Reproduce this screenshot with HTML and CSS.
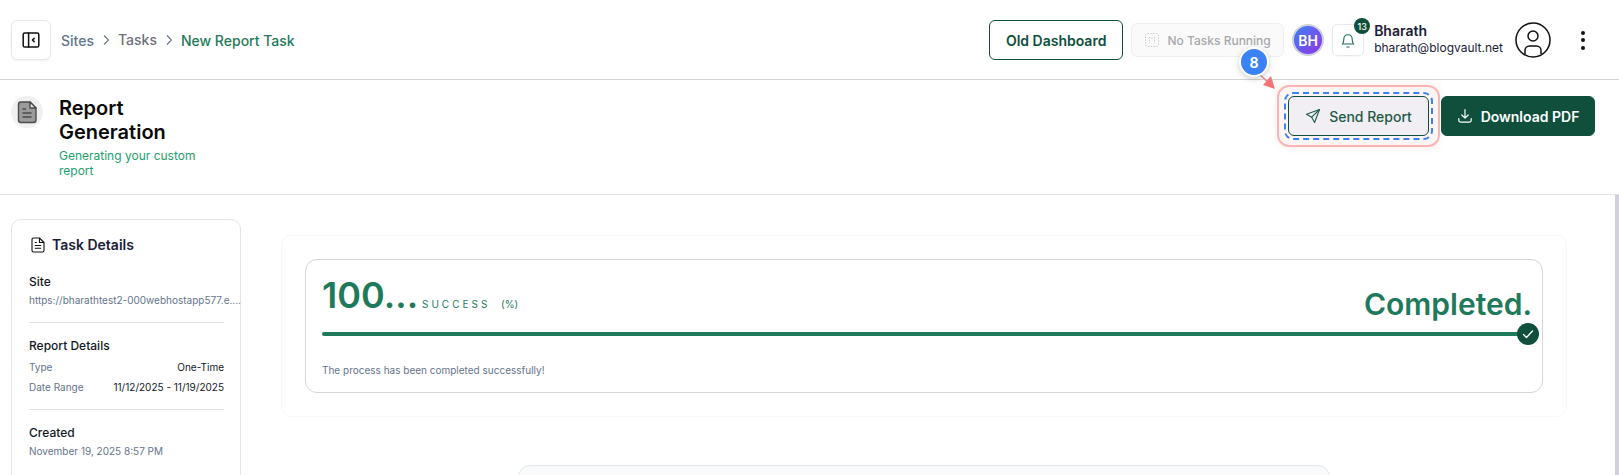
FILE: index.html
```html
<!DOCTYPE html>
<html lang="en">
<head>
  <meta charset="UTF-8">
  <title>New Report Task</title>
  <link rel="stylesheet" href="styles.css">
</head>
<body>
  <header class="topbar">
    <button class="toggle">
      <svg width="18" height="18" viewBox="0 0 18 18" fill="none" stroke="#111" stroke-width="1.5" stroke-linejoin="round" stroke-linecap="round"><rect x="1.2" y="2" width="15.6" height="14" rx="1.6"/><path d="M6.6 2v14"/><path d="M12.2 7.4 10.4 9l1.8 1.6"/></svg>
    </button>
    <nav class="crumbs">
      <span class="crumb-site">Sites</span>
      <svg class="chev" width="16" height="16" viewBox="0 0 16 16" fill="none" stroke="#64748b" stroke-width="1.1"><path d="m6 3.5 4.5 4.5L6 12.5"/></svg>
      <span class="crumb-tasks">Tasks</span>
      <svg class="chev" width="16" height="16" viewBox="0 0 16 16" fill="none" stroke="#64748b" stroke-width="1.1"><path d="m6 3.5 4.5 4.5L6 12.5"/></svg>
      <span class="crumb-now">New Report Task</span>
    </nav>
    <div class="top-right">
      <button class="old-dash">Old Dashboard</button>
      <div class="no-tasks">
        <svg width="14" height="14" viewBox="0 0 14 14" fill="none" stroke="#c8c8cc" stroke-width="1" stroke-dasharray="1.4 1.4"><rect x="0.5" y="0.5" width="13" height="13" rx="2"/><path d="M4.5 4v6M9.5 4v6M7 4v3"/></svg>
        <span>No Tasks Running</span>
      </div>
      <div class="avatar">BH</div>
      <div class="bell">
        <svg width="18" height="18" viewBox="0 0 16 16" fill="none" stroke="#1e6b52" stroke-width="1" stroke-linecap="round" stroke-linejoin="round"><path d="M3 11.6c1-1.1 1.3-2 1.3-4.600a3.700 3.700 0 0 1 7.400 0c0 2.600.3 3.500 1.300 4.600z"/><path d="M7 14.200h2"/></svg>
        <span class="bell-count">13</span>
      </div>
      <div class="who">
        <div class="who-name">Bharath</div>
        <div class="who-mail">bharath@blogvault.net</div>
      </div>
      <svg class="user-pic" width="36" height="36" viewBox="0 0 36 36" fill="none" stroke="#111" stroke-width="1.5"><circle cx="18" cy="18" r="17"/><circle cx="18" cy="14" r="5"/><path d="M10 32v-3.500a4.500 4.500 0 0 1 4.500-4.500h7a4.500 4.500 0 0 1 4.500 4.500V32"/></svg>
      <div class="kebab"><i></i><i></i><i></i></div>
    </div>
  </header>

  <section class="page-head">
    <div class="doc-badge">
      <svg width="22" height="24" viewBox="0 0 22 24" stroke="#4b4b4b" stroke-width="1.400" stroke-linejoin="round"><path fill="#9b9b9b" d="M5 2h9l6 6v12a2.500 2.500 0 0 1-2.500 2.500h-12.500a2.500 2.500 0 0 1-2.500-2.500v-15.500a2.500 2.500 0 0 1 2.500-2.500z"/><path fill="#e8e8e8" d="M14 2v6h6z"/><path fill="none" d="M6.500 9h3.500M6.500 13h9M6.500 17h9"/></svg>
    </div>
    <div class="head-text">
      <h1>Report Generation</h1>
      <p>Generating your custom report</p>
    </div>
    <div class="head-actions">
      <div class="send-wrap">
        <div class="ring-pink"></div>
        <button class="send">
          <svg width="16" height="16" viewBox="0 0 16 16" fill="none" stroke="#1f5a47" stroke-width="1.100" stroke-linejoin="round" stroke-linecap="round"><path d="M14.500 1.500 1.500 6.300l5.200 2.900 2.900 5.300z"/><path d="M14.500 1.500 6.700 9.200"/></svg>
          Send Report
        </button>
        <div class="ring-blue"></div>
        <svg class="arrow" width="32" height="30" viewBox="0 0 32 30"><path d="M2 2 22 20" stroke="#f08a8a" stroke-width="1.600"/><path d="M28 26 16 22l8-9z" fill="#f27474"/></svg>
        <div class="step">8</div>
      </div>
      <button class="download">
        <svg width="16" height="16" viewBox="0 0 16 16" fill="none" stroke="#fff" stroke-width="1.200" stroke-linecap="round" stroke-linejoin="round"><path d="M8 1.500v8.500M4.800 7 8 10.200 11.200 7"/><path d="M1.800 10.500v1.800a1.800 1.800 0 0 0 1.800 1.800h8.800a1.800 1.800 0 0 0 1.800-1.800v-1.800"/></svg>
        Download PDF
      </button>
    </div>
  </section>

  <div class="body-row">
    <aside class="details">
      <div class="details-title">
        <svg width="14" height="16" viewBox="0 0 14 16" fill="none" stroke="#111" stroke-width="1.100" stroke-linejoin="round"><path d="M2.500 1h6l4.500 4.500v8a1.500 1.500 0 0 1-1.500 1.500h-9a1.500 1.500 0 0 1-1.500-1.500v-11a1.500 1.500 0 0 1 1.500-1.500z"/><path d="M8.500 1v4.500h4.500M3.800 5.500h2M3.800 8.500h6.400M3.800 11.300h6.400"/></svg>
        <span>Task Details</span>
      </div>
      <div class="block first">
        <h3>Site</h3>
        <div class="url">https://bharathtest2-000webhostapp577.e....</div>
      </div>
      <div class="block">
        <h3>Report Details</h3>
        <div class="kv"><span>Type</span><b>One-Time</b></div>
        <div class="kv"><span>Date Range</span><b>11/12/2025 - 11/19/2025</b></div>
      </div>
      <div class="block">
        <h3>Created</h3>
        <div class="url">November 19, 2025 8:57 PM</div>
      </div>
    </aside>

    <main class="main">
      <div class="panel">
        <div class="progress-card">
          <div class="progress-top">
            <div class="pct">100...</div>
            <div class="state">SUCCESS</div>
            <div class="unit">(%)</div>
            <div class="done">Completed.</div>
          </div>
          <div class="bar">
            <div class="tick">
              <svg width="14" height="14" viewBox="0 0 14 14" fill="none" stroke="#fff" stroke-width="1.300" stroke-linecap="round" stroke-linejoin="round"><path d="m2.500 7.500 3 3 6-6.500"/></svg>
            </div>
          </div>
          <p class="note">The process has been completed successfully!</p>
        </div>
      </div>
      <div class="lower-card"></div>
    </main>
    <div class="thumb"></div>
  </div>
</body>
</html>
```

FILE: styles.css
```css
* { box-sizing: border-box; }
html, body { height: 100%; }
body { margin: 0; height: 475px; overflow: hidden; background: #fff; color: #0f172a; font-family: Inter, "Liberation Sans", sans-serif; display: flex; flex-direction: column; }
button { font-family: inherit; cursor: pointer; }

.topbar { height: 80px; flex: none; display: flex; align-items: center; padding: 1px 34px 0 11px; border-bottom: 1px solid #d4d4d4; }
.toggle { width: 40px; height: 40px; display: flex; align-items: center; justify-content: center; background: #fff; border: 1px solid #e5e7eb; border-radius: 6px; box-shadow: 0 1px 2px #0000000d; padding: 0; }
.crumbs { display: flex; align-items: center; gap: 4px; margin-left: 10px; font-size: 14px; font-weight: 500; }
.crumb-site { color: #64748b; }
.crumb-tasks { color: #71717a; position: relative; top: -1px; }
.crumb-now { color: #1f7a5a; }
.chev { flex: none; }

.top-right { margin-left: auto; display: flex; align-items: center; }
.old-dash { width: 134px; height: 40px; background: #fff; border: 1px solid #0f4f3c; border-radius: 6px; color: #0f4f3c; font-size: 14px; font-weight: 600; padding: 0; }
.no-tasks { width: 153px; height: 34px; margin-left: 8px; display: flex; align-items: center; justify-content: center; gap: 9px; background: #fafafa; border: 1px solid #f0f0f0; border-radius: 6px; color: #a8a8ac; font-size: 12px; font-weight: 500; }
.avatar { width: 32px; height: 32px; margin-left: 8px; display: flex; align-items: center; justify-content: center; border-radius: 50%; border: 2px solid #cfd2da; background: linear-gradient(135deg, #3b82f6, #9333ea); color: #fff; font-size: 14px; font-weight: 600; }
.bell { position: relative; width: 32px; height: 32px; margin-left: 8px; display: flex; align-items: center; justify-content: center; border: 1px solid #e8e8e8; border-radius: 5px; box-shadow: 0 1px 2px #0000000a; }
.bell-count { position: absolute; top: -7px; right: -7px; width: 16px; height: 16px; border-radius: 50%; background: #0f4f3c; color: #fff; font-size: 9px; font-weight: 500; display: flex; align-items: center; justify-content: center; }
.who { margin-left: 10px; }
.who-name { font-size: 14px; font-weight: 600; line-height: 16px; color: #1a2035; }
.who-mail { font-size: 12px; line-height: 18px; color: #1a2035; }
.user-pic { margin-left: 12px; flex: none; }
.kebab { margin-left: 30px; width: 4px; display: flex; flex-direction: column; gap: 3.500px; }
.kebab i { width: 4px; height: 4px; border-radius: 50%; background: #111; display: block; }

.page-head { height: 115px; flex: none; display: flex; align-items: flex-start; padding: 16px 24px 0 11px; border-bottom: 1px solid #e3e3e3; }
.doc-badge { width: 32px; height: 32px; flex: none; border-radius: 50%; background: #f0f0f0; display: flex; align-items: center; justify-content: center; }
.head-text { width: 160px; margin-left: 16px; }
.head-text h1 { margin: 0; font-size: 20px; line-height: 24px; font-weight: 600; color: #0a0a0a; }
.head-text p { margin: 4px 0 0; font-size: 12px; line-height: 15px; color: #22a06b; }
.head-actions { margin-left: auto; display: flex; gap: 12px; }
.send-wrap { position: relative; }
.send, .download { height: 40px; display: flex; align-items: center; justify-content: center; gap: 8px; border-radius: 6px; font-size: 14px; padding: 0; position: relative; }
.send { width: 141px; background: #f1eff3; border: 1px solid #0f4f3c; color: #1f5a47; font-weight: 500; }
.download { width: 154px; background: #0f4f3c; border: 1px solid #0f4f3c; color: #fff; font-weight: 600; }
.ring-pink { position: absolute; inset: -11px; border: 2px solid #fbb4b4; border-radius: 12px; background: #ef44440c; box-shadow: 0 0 8px #f8717122; pointer-events: none; }
.ring-blue { position: absolute; inset: -4px; border: 2px dashed #3b82f6; border-radius: 9px; pointer-events: none; }
.arrow { position: absolute; left: -41px; top: -33px; }
.step { position: absolute; left: -49px; top: -49px; width: 30px; height: 30px; border-radius: 50%; background: #3b82f6; border: 2px solid #fff; box-shadow: 0 2px 6px #00000033; color: #fff; font-size: 14px; font-weight: 700; display: flex; align-items: center; justify-content: center; }

.body-row { flex: 1; min-height: 0; display: flex; }
.details { width: 230px; height: 300px; flex: none; margin: 24px 0 0 11px; padding: 16px 16px 16px 17px; background: #fff; border: 1px solid #e5e5e5; border-radius: 10px; }
.details-title { display: flex; align-items: center; gap: 7px; font-size: 14px; font-weight: 600; line-height: 17px; color: #1a2035; padding-left: 2px; }
.block { padding: 0 0 15px; margin-top: 15px; border-bottom: 1px solid #e2e2e2; }
.block.first { margin-top: 21px; }
.block:last-child { border-bottom: 0; }
.block h3 { margin: 0 0 4px; font-size: 12px; line-height: 15px; font-weight: 500; color: #111827; }
.url { font-size: 10px; line-height: 14px; color: #64748b; white-space: nowrap; }
.kv { display: flex; justify-content: space-between; font-size: 10px; line-height: 14px; margin-top: 7px; }
.kv + .kv { margin-top: 6px; }
.kv span { color: #64748b; }
.kv b { font-weight: 400; color: #111827; }

.main { flex: 1; min-width: 0; padding: 40px 48px 0 40px; }
.panel { height: 182px; padding: 23px; background: #fff; border: 1px solid #f8f8f8; border-radius: 10px; }
.progress-card { height: 134px; padding: 0 10px 0 16px; background: #fff; border: 1px solid #d6d6d6; border-radius: 12px; }
.progress-top { height: 72px; display: flex; align-items: flex-end; color: #1e7a5a; }
.pct { font-size: 36px; line-height: 44px; font-weight: 600; width: 100px; flex: none; margin-bottom: 15px; }
.state { font-size: 10px; letter-spacing: 3px; line-height: 14px; margin-bottom: 21px; width: 79px; flex: none; }
.unit { font-size: 10px; line-height: 14px; margin-bottom: 21px; }
.done { margin: 0 0 8px auto; font-size: 30px; line-height: 40px; font-weight: 600; }
.bar { position: relative; height: 4px; background: #1e7a5a; border-radius: 2px; }
.tick { position: absolute; right: -7px; top: -9px; width: 22px; height: 22px; border-radius: 50%; background: #0f4f3c; display: flex; align-items: center; justify-content: center; }
.note { margin: 27px 0 0; font-size: 10px; line-height: 14px; color: #64748b; }
.lower-card { width: 812px; height: 60px; margin: 48px auto 0; background: #f8fafc; border: 1px solid #e2e8f0; border-radius: 12px; }

.thumb { width: 4px; flex: none; background: #d1d1dc; }
```
